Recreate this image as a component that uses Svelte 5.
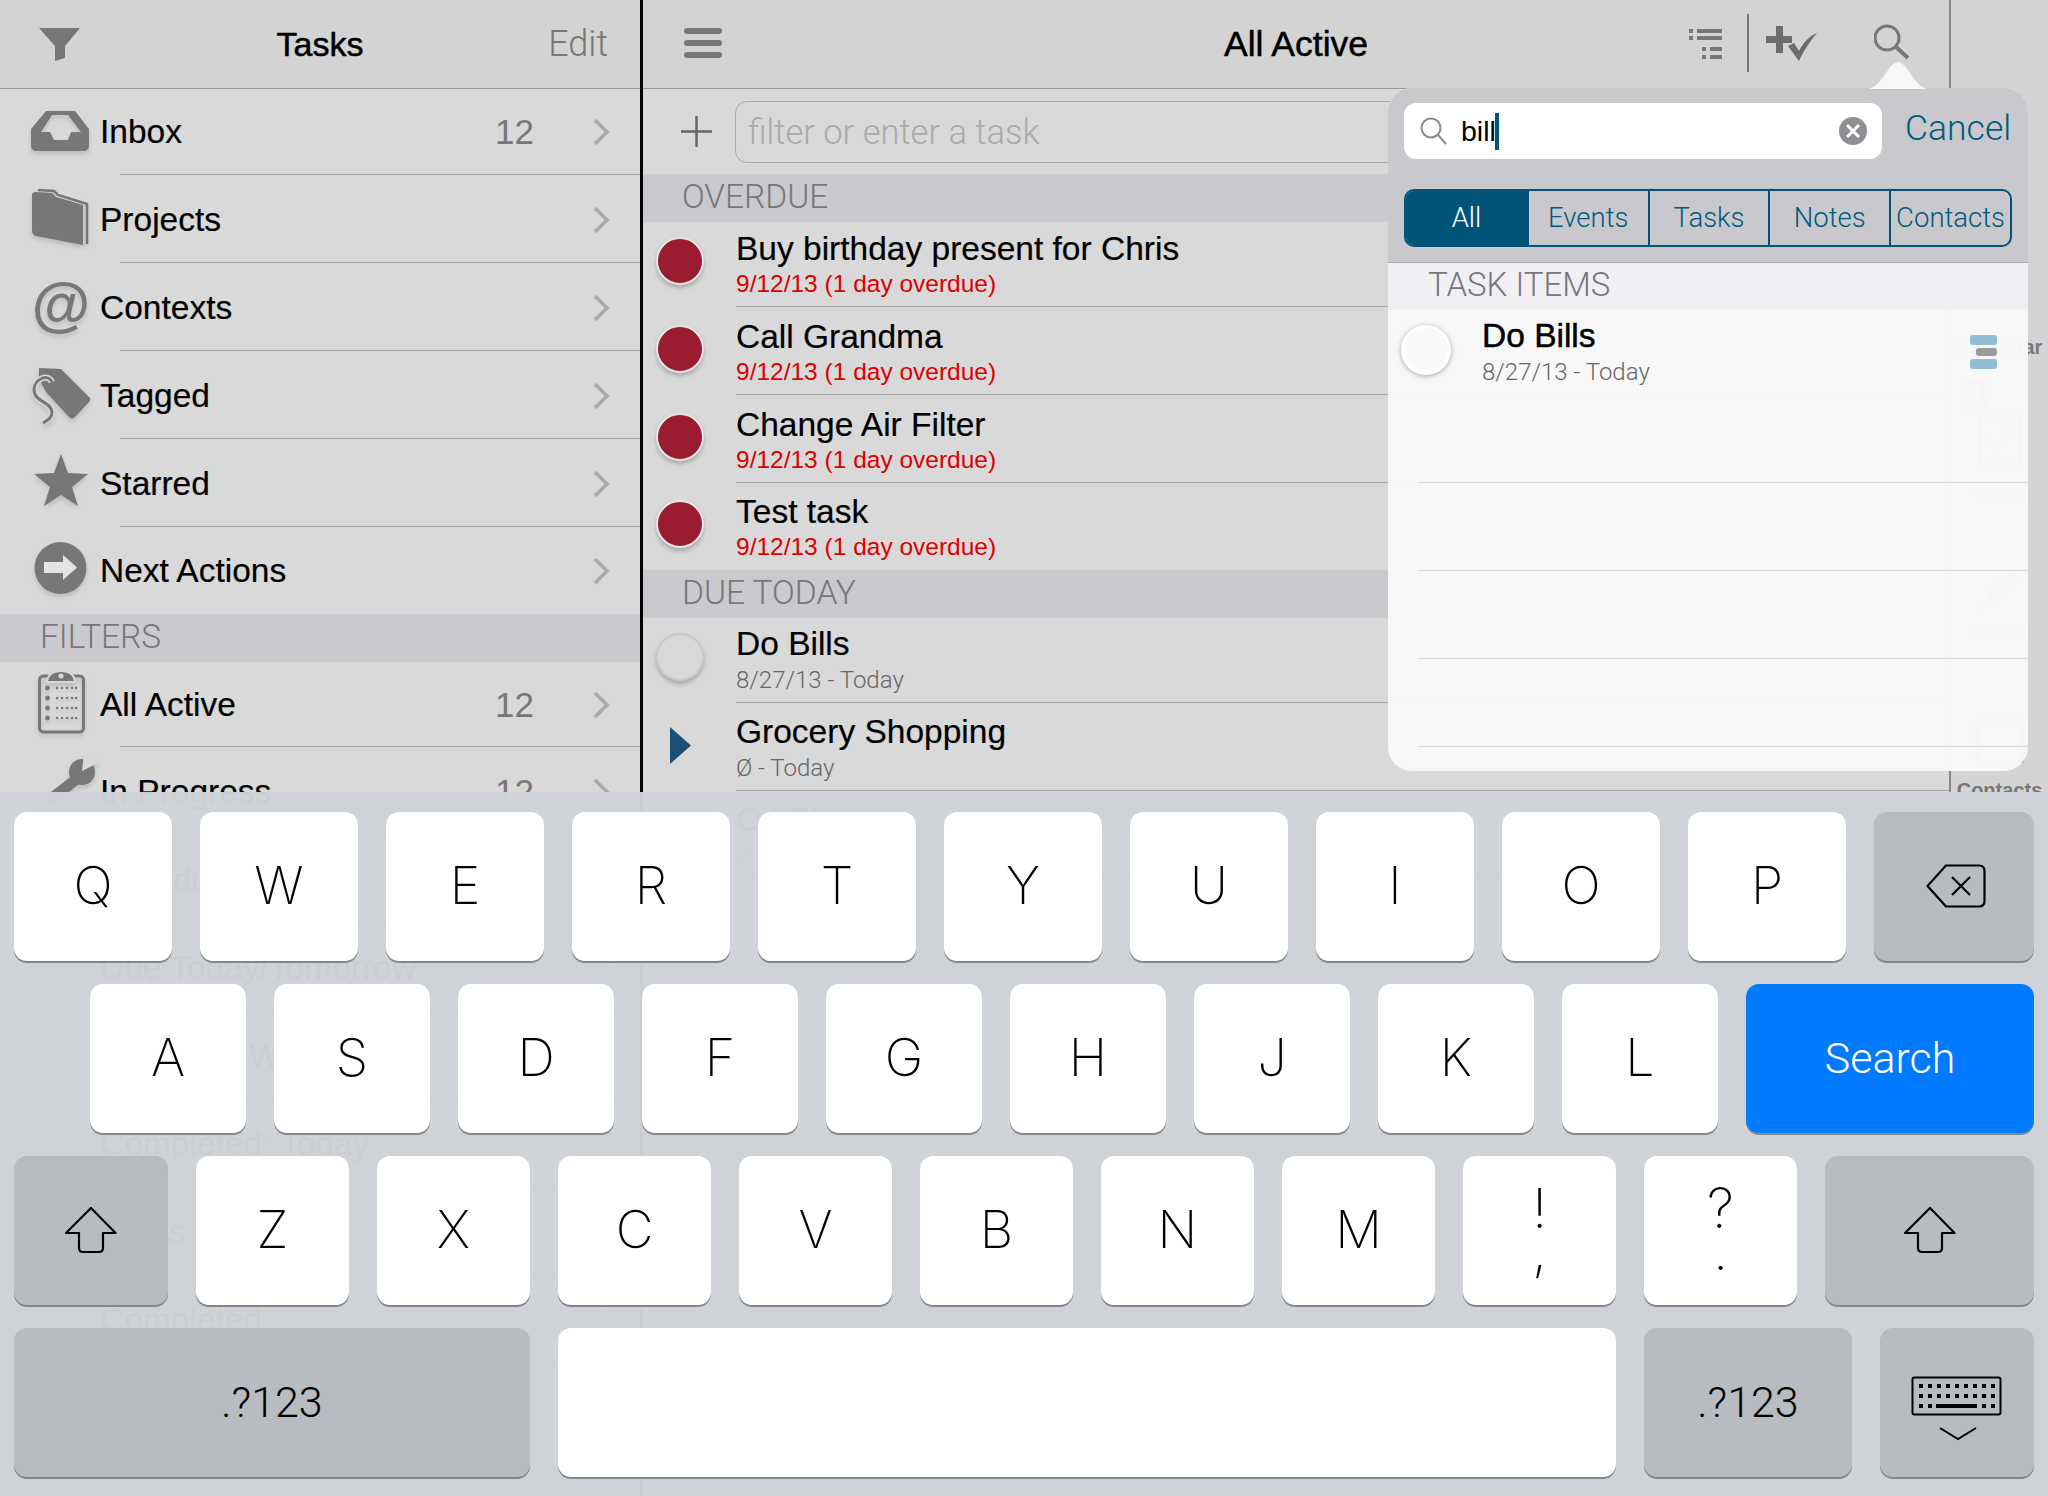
<script>
  const lists = [
    { label: 'Inbox', count: 12, icon: 'inbox' },
    { label: 'Projects', icon: 'folder' },
    { label: 'Contexts', icon: 'at' },
    { label: 'Tagged', icon: 'tag' },
    { label: 'Starred', icon: 'star' },
    { label: 'Next Actions', icon: 'next' }
  ];
  const filters = [
    { label: 'All Active', count: 12, icon: 'clipboard' },
    { label: 'In Progress', count: 12, icon: 'wrench' },
    { label: 'Overdue', icon: '' },
    { label: 'Due Today/Tomorrow', icon: '' },
    { label: 'Due Next Week', icon: '' },
    { label: 'Completed: Today', icon: '' },
    { label: 'Tasks', icon: '' },
    { label: 'Completed', icon: '' }
  ];
  const overdue = ['Buy birthday present for Chris', 'Call Grandma', 'Change Air Filter', 'Test task'];
  const today = [
    { title: 'Do Bills', sub: '8/27/13 - Today', mark: 'open' },
    { title: 'Grocery Shopping', sub: 'Ø - Today', mark: 'play' },
    { title: 'Oil Change', sub: 'Ø - Today', mark: 'open' }
  ];
  const scopes = ['All', 'Events', 'Tasks', 'Notes', 'Contacts'];

  const rows = [
    { cls: 'r1', keys: 'QWERTYUIOP'.split('') },
    { cls: 'r2', keys: 'ASDFGHJKL'.split('') },
    { cls: 'r3', keys: 'ZXCVBNM'.split('') }
  ];
  const dotRows = [28, 38, 48, 58];
  const dotCols = [57, 62, 67, 72, 76];
</script>

{#snippet chevron()}
  <svg class="chev" width="17" height="28" viewBox="0 0 17 28"><path d="M2 2l12 12L2 26" fill="none" stroke="#aaa" stroke-width="3.6" /></svg>
{/snippet}

{#snippet shift()}
  <svg width="54" height="48" viewBox="0 0 54 48"><path d="M27 2L2 27h0.5H15v15q0 4 4 4h16q4 0 4-4V27h12.500z" fill="none" stroke="#000" stroke-width="2.200" stroke-linejoin="round" /></svg>
{/snippet}

{#snippet icon(name)}
  <svg class="ico" width="100" height="88" viewBox="0 0 100 88">
    {#if name === 'inbox'}
      <path fill-rule="evenodd" d="M46 23H75L89 41V58a5 5 0 0 1-5 5H36a5 5 0 0 1-5-5V41ZM52 27L41 44H50L54 52H68L71 44H81L68 27Z" />
    {:else if name === 'folder'}
      <path d="M32 19q0-3 4-3l16 1 4 4 27 8V69L36 60q-4-1-4-5Z" />
      <path d="M38 14l16 1 4 4 29 9V68" fill="none" stroke="#777" stroke-width="2.500" />
    {:else if name === 'at'}
      <text x="60" y="61" text-anchor="middle" font-size="60" font-weight="700" font-style="italic">@</text>
    {:else if name === 'tag'}
      <path d="M39 16L61 17L90 46q1 2-1 4L75 65q-3 3-6 0L46 40 39 27Z" />
      <path d="M52 30C48 21 34 27 34 38 34 50 52 50 52 60 52 66 48 68 43 71" fill="none" stroke="#d9d9d9" stroke-width="6" />
      <path d="M52 30C48 21 34 27 34 38 34 50 52 50 52 60 52 66 48 68 43 71" fill="none" stroke="#777" stroke-width="3" />
    {:else if name === 'star'}
      <path d="M61 14L68 33 88 34 72 47 78 66 61 55 44 66 50 47 34 34 54 33Z" />
    {:else if name === 'next'}
      <circle cx="60.500" cy="42" r="26" />
      <path d="M44 36H63V29L77 41.500 63 54V47H44Z" fill="#e4e4e4" />
    {:else if name === 'clipboard'}
      <rect x="39.500" y="16" width="44" height="56" rx="4" fill="none" stroke="#777" stroke-width="3" />
      <path d="M47 22q1-11 14-11t14 11Z" stroke="#d9d9d9" stroke-width="2" />
      <circle cx="61" cy="16" r="2.500" fill="#d9d9d9" />
      {#each dotRows as y}
        <circle cx="47.500" cy={y} r="2.400" />
        {#each dotCols as x}
          <circle cx={x} cy={y} r="1.300" />
        {/each}
      {/each}
    {:else if name === 'wrench'}
      <path d="M78 30L52 50" stroke="#777" stroke-width="11" stroke-linecap="round" />
      <circle cx="82" cy="24" r="13" />
      <path d="M82 23L84 6 100 14Z" fill="#d9d9d9" />
    {/if}
  </svg>
{/snippet}

<div class="screen">
  <section class="pane left">
    <header class="bar">
      <svg class="funnel" width="42" height="33" viewBox="0 0 42 33"><path d="M0 0H41L26 18V30L16 33V18Z" fill="#777" /></svg>
      <h1>Tasks</h1>
      <span class="edit">Edit</span>
    </header>
    {#each lists as item}
      <div class="row">
        {@render icon(item.icon)}
        <span class="label">{item.label}</span>
        {#if item.count}<span class="count">{item.count}</span>{/if}
        {@render chevron()}
      </div>
    {/each}
    <div class="band">FILTERS</div>
    {#each filters as item}
      <div class="row">
        {@render icon(item.icon)}
        <span class="label">{item.label}</span>
        {#if item.count}<span class="count">{item.count}</span>{/if}
        {@render chevron()}
      </div>
    {/each}
  </section>

  <section class="pane middle">
    <header class="bar">
      <div class="burger"><i></i><i></i><i></i></div>
      <h1 class="big">All Active</h1>
      <div class="tools">
        <svg width="34" height="30" viewBox="0 0 34 30" fill="#777">
          <path d="M1 0h4v4H1zM9 0h25v4H9zM1 7h4v4H1zM9 7h25v4H9zM14 18h4v4h-4zM22 18h12v4H22zM14 26h4v4h-4zM22 26h12v4H22z" />
        </svg>
        <span class="tool-line"></span>
        <svg width="52" height="36" viewBox="0 0 52 36" fill="#6c6c6c">
          <path d="M10 0h7v10h9v7h-9v10h-7V17H0v-7h10z" />
          <path d="M22 20l6-3 5 8C37 17 43 10 51 7 44 15 38 24 33 35Z" />
        </svg>
        <svg class="glass" width="38" height="40" viewBox="0 0 38 40" fill="none" stroke="#777">
          <circle cx="13" cy="16" r="12" stroke-width="3" />
          <path d="M22 25L34 36" stroke-width="4" />
        </svg>
      </div>
    </header>

    <div class="add">
      <svg width="31" height="31" viewBox="0 0 31 31"><path d="M15.500 0v31M0 15.500h31" stroke="#666" stroke-width="2.500" /></svg>
      <div class="filter">filter or enter a task</div>
    </div>

    <div class="band">OVERDUE</div>
    {#each overdue as title}
      <div class="task">
        <span class="dot red"></span>
        <div class="task-body">
          <div class="title">{title}</div>
          <div class="sub late">9/12/13 (1 day overdue)</div>
        </div>
      </div>
    {/each}
    <div class="band">DUE TODAY</div>
    {#each today as t}
      <div class="task today">
        {#if t.mark === 'play'}
          <svg class="play" width="21" height="37" viewBox="0 0 21 37"><path d="M0 0L21 18.500 0 37Z" fill="#1c4f73" /></svg>
        {:else}
          <span class="dot"></span>
        {/if}
        <div class="task-body">
          <div class="title">{t.title}</div>
          <div class="sub">{t.sub}</div>
        </div>
      </div>
    {/each}
  </section>

  <section class="pane side">
    <div class="side-item cal">Calendar</div>
    <div class="badge">4</div>
    <svg class="side-ico" width="44" height="54" viewBox="0 0 44 54"><rect x="2" y="4" width="40" height="48" rx="4" fill="none" stroke="#6f8fb0" stroke-width="3" /><path d="M10 26l9 11 16-22" fill="none" stroke="#6f8fb0" stroke-width="5" /></svg>
    <div class="side-item tasks">Tasks</div>
    <svg class="side-ico pencil" width="44" height="46" viewBox="0 0 44 46"><path d="M4 44L10 28 32 4 42 12 18 36Z" fill="#888" /></svg>
    <div class="side-item notes">Notes</div>
    <svg class="side-ico person" width="50" height="46" viewBox="0 0 50 46"><rect x="2" y="2" width="46" height="42" rx="3" fill="none" stroke="#888" stroke-width="3" /></svg>
    <div class="side-item contacts">Contacts</div>
  </section>

  <aside class="popover">
    <svg class="nub" width="60" height="27" viewBox="0 0 60 27"><path d="M0 27C14 25 20 1 30 0 40 1 46 25 60 27Z" fill="#f7f7f7" /></svg>
    <div class="search-head">
      <div class="search-top">
        <div class="field">
          <svg width="28" height="28" viewBox="0 0 28 28" fill="none" stroke="#8a8a8a" stroke-width="2"><circle cx="11" cy="11" r="9.500" /><path d="M18 18l8 9" /></svg>
          <span class="typed">bill</span><span class="caret"></span>
          <span class="clear">
            <svg width="16" height="16" viewBox="0 0 16 16"><path d="M2 2l12 12M14 2L2 14" stroke="#fff" stroke-width="3" /></svg>
          </span>
        </div>
        <span class="cancel">Cancel</span>
      </div>
      <div class="scopes">
        {#each scopes as s, i}
          <span class="scope" class:on={i === 0}>{s}</span>
        {/each}
      </div>
    </div>
    <div class="results-band">TASK ITEMS</div>
    <div class="hit">
      <span class="dot white"></span>
      <div class="flat">
        <div class="title strong">Do Bills</div>
        <div class="sub">8/27/13 - Today</div>
      </div>
      <div class="prio"><i></i><i class="mid"></i><i></i></div>
    </div>
    <div class="blank"></div>
    <div class="blank"></div>
    <div class="blank"></div>
    <div class="blank"></div>
  </aside>

  <div class="keyboard">
    <div class="krow r1">
      {#each rows[0].keys as k}<div class="key">{k}</div>{/each}
      <div class="key dark back">
        <svg width="60" height="44" viewBox="0 0 60 44" fill="none" stroke="#000" stroke-width="2.200"><path d="M20 1.500H53q5.500 0 5.500 5.500V37q0 5.500-5.500 5.500H20L1.500 22Z" stroke-linejoin="round" /><path d="M26 13L44 31M44 13L26 31" /></svg>
      </div>
    </div>
    <div class="krow r2">
      {#each rows[1].keys as k}<div class="key">{k}</div>{/each}
      <div class="key go">Search</div>
    </div>
    <div class="krow r3">
      <div class="key dark shift-l">{@render shift()}</div>
      {#each rows[2].keys as k}<div class="key">{k}</div>{/each}
      <div class="key stack"><span>!</span><span>,</span></div>
      <div class="key stack"><span>?</span><span>.</span></div>
      <div class="key dark shift-r">{@render shift()}</div>
    </div>
    <div class="krow r4">
      <div class="key dark num wide">.?123</div>
      <div class="key space"></div>
      <div class="key dark num mid">.?123</div>
      <div class="key dark hide">
        <svg width="92" height="66" viewBox="0 0 92 66">
          <rect x="1.500" y="1.500" width="88" height="37" rx="2" fill="none" stroke="#000" stroke-width="2" />
          <path d="M8 8h4v4H8zM17 8h4v4h-4zM26 8h4v4h-4zM35 8h4v4h-4zM44 8h4v4h-4zM53 8h4v4h-4zM62 8h4v4h-4zM71 8h4v4h-4zM80 8h4v4h-4zM8 18h4v4H8zM17 18h4v4h-4zM26 18h4v4h-4zM35 18h4v4h-4zM44 18h4v4h-4zM53 18h4v4h-4zM62 18h4v4h-4zM71 18h4v4h-4zM80 18h4v4h-4zM8 28h4v4H8zM17 28h4v4h-4zM25 28h41v4H25zM71 28h4v4h-4zM80 28h4v4h-4z" fill="#000" />
          <path d="M29 52l18 11 18-11" fill="none" stroke="#000" stroke-width="2" />
        </svg>
      </div>
    </div>
  </div>
</div>

<style>
  :global(body) {
    margin: 0;
    background: #d9d9d9;
  }

  .screen {
    position: relative;
    display: flex;
    width: 2048px;
    height: 1496px;
    overflow: hidden;
    font-family: "Liberation Sans", Arial, sans-serif;
    color: #000;
  }

  .pane {
    flex: none;
    background: #d9d9d9;
  }

  .left {
    width: 640px;
    border-right: 3px solid #000;
  }

  .middle {
    width: 1306px;
    border-right: 2px solid #888;
  }

  .side {
    flex: 1;
    box-sizing: border-box;
    padding-top: 335px;
    background: #d4d4d4;
    display: flex;
    flex-direction: column;
    align-items: center;
    color: #777;
    font-size: 21px;
  }

  .bar {
    position: relative;
    height: 88px;
    border-bottom: 1px solid #9a9a9a;
    background: #d3d3d3;
    display: flex;
    align-items: center;
    justify-content: center;
  }

  .bar h1 {
    margin: 0;
    font-size: 34px;
    font-weight: 400;
    -webkit-text-stroke: 0.5px #000;
  }

  .bar h1.big {
    font-size: 35.500px;
  }

  .funnel {
    position: absolute;
    left: 39px;
    top: 28px;
  }

  .edit {
    position: absolute;
    right: 32px;
    font-family: Roboto, sans-serif;
    font-weight: 300;
    font-size: 36px;
    color: #777;
  }

  .row {
    position: relative;
    height: 88px;
    display: flex;
    align-items: center;
    padding-right: 30px;
    box-sizing: border-box;
    border-bottom: 1px solid transparent;
  }

  .bar + .row {
    height: 87px;
  }

  .row::after {
    content: "";
    position: absolute;
    left: 120px;
    right: 0;
    bottom: 0;
    height: 1px;
    background: #a8a8a8;
  }

  .band + .row,
  .row:has(+ .band) {
    height: 86px;
  }

  .row:has(+ .band)::after {
    display: none;
  }

  .ico {
    flex: none;
    align-self: flex-end;
    fill: #777;
    color: #777;
    filter: drop-shadow(0 3px 2px rgba(0, 0, 0, 0.13));
    margin-bottom: -1px;
  }

  .label {
    flex: 1;
    font-size: 33.500px;
    -webkit-text-stroke: 0.2px #000;
  }

  .count {
    margin-right: 59px;
    font-size: 35px;
    color: #777;
  }

  .band {
    height: 48px;
    line-height: 46px;
    padding-left: 40px;
    background: #c9c9ce;
    color: #777;
    font-family: Roboto, sans-serif;
    font-weight: 300;
    font-size: 33.500px;
  }

  .middle .band {
    padding-left: 39px;
  }

  .burger {
    position: absolute;
    left: 41px;
    top: 28px;
    display: flex;
    flex-direction: column;
    gap: 6px;
  }

  .burger i {
    width: 38px;
    height: 6px;
    border-radius: 3px;
    background: #777;
  }

  .tools {
    position: absolute;
    left: 1045px;
    top: 0;
    height: 88px;
  }

  .tools svg,
  .tool-line {
    position: absolute;
  }

  .tools svg:nth-of-type(1) {
    left: 0;
    top: 29px;
  }

  .tool-line {
    left: 59px;
    top: 14px;
    width: 2px;
    height: 58px;
    background: #777;
  }

  .tools svg:nth-of-type(2) {
    left: 78px;
    top: 26px;
  }

  .tools svg:nth-of-type(3) {
    left: 186px;
    top: 22px;
  }

  .add {
    display: flex;
    align-items: center;
    height: 85px;
    padding-left: 38px;
    gap: 23px;
    box-sizing: border-box;
  }

  .filter {
    flex: 1;
    height: 60px;
    margin-right: 40px;
    line-height: 60px;
    padding-left: 12px;
    border: 1.500px solid #aaa;
    border-radius: 12px;
    color: #aaa;
    font-family: Roboto, sans-serif;
    font-weight: 300;
    font-size: 34.500px;
  }

  .task {
    position: relative;
    height: 88px;
    box-sizing: border-box;
    padding-left: 93px;
    display: flex;
    flex-direction: column;
    justify-content: flex-end;
  }

  .band + .task {
    height: 85px;
  }

  .task:has(+ .band) {
    height: 87px;
  }

  .task:has(+ .band) .task-body {
    border-bottom-color: transparent;
  }

  .task-body {
    height: 88px;
    flex: none;
    box-sizing: border-box;
    border-bottom: 1px solid #a8a8a8;
    padding-top: 11px;
  }

  .today .task-body {
    padding-top: 10px;
  }

  .title {
    font-size: 33.500px;
    line-height: 38px;
    -webkit-text-stroke: 0.2px #000;
  }

  .sub {
    margin-top: 2px;
    font-size: 24px;
    line-height: 30px;
    color: #666;
    font-family: Roboto, sans-serif;
    font-weight: 300;
  }

  .late {
    margin-top: 1px;
    color: #de0000;
    font-family: "Liberation Sans", sans-serif;
    font-size: 24.500px;
    font-weight: 400;
  }

  .dot {
    position: absolute;
    left: 13px;
    bottom: 22px;
    width: 44px;
    height: 44px;
    box-sizing: content-box;
    border: 2.500px solid #cbcbcb;
    border-radius: 50%;
    background: #d9d9d9;
    box-shadow: 0 3px 4px rgba(0, 0, 0, 0.22);
  }

  .dot.red {
    background: #991c30;
    border-color: #e6e6e6;
  }

  .play {
    position: absolute;
    left: 27px;
    bottom: 27px;
  }

  .side-ico {
    display: block;
    flex: none;
  }

  .side-item {
    line-height: 24px;
  }

  .cal,
  .contacts {
    font-weight: 700;
    font-size: 20px;
  }

  .badge {
    align-self: flex-start;
    margin: 20px 0 2px 10px;
    width: 29px;
    height: 31px;
    border-radius: 6px;
    background: #d36a60;
    color: #fff;
    text-align: center;
    font-size: 26px;
  }

  .tasks {
    margin-top: 16px;
  }

  .pencil {
    margin-top: 59px;
  }

  .notes {
    margin-top: 10px;
  }

  .person {
    margin-top: 73px;
  }

  .contacts {
    margin-top: 14px;
  }

  /* search popover, hangs off the magnifier */
  .popover {
    position: absolute;
    left: 1388px;
    top: 88px;
    width: 640px;
    height: 683px;
    border-radius: 24px;
    background: rgba(248, 248, 248, 0.975);
  }

  .nub {
    position: absolute;
    left: 480px;
    top: -26px;
  }

  .search-head {
    height: 175px;
    box-sizing: border-box;
    padding: 15px 16px 0;
    border-radius: 24px 24px 0 0;
    background: #c8c8cd;
    border-bottom: 1.500px solid #a9a9ad;
  }

  .search-top {
    display: flex;
    align-items: center;
    gap: 23px;
  }

  .field {
    position: relative;
    width: 478px;
    height: 56px;
    box-sizing: border-box;
    padding-left: 16px;
    border-radius: 12px;
    background: #fff;
    display: flex;
    align-items: center;
  }

  .typed {
    margin-left: 13px;
    font-size: 28.500px;
  }

  .caret {
    width: 4px;
    height: 37px;
    background: #005478;
    margin-left: -1px;
  }

  .clear {
    position: absolute;
    right: 15px;
    top: 14px;
    width: 28px;
    height: 28px;
    border-radius: 50%;
    background: #8e8e93;
    display: flex;
    align-items: center;
    justify-content: center;
  }

  .cancel {
    margin-top: -6px;
    color: #005a7e;
    font-family: Roboto, sans-serif;
    font-weight: 300;
    font-size: 35.500px;
  }

  .scopes {
    display: grid;
    grid-template-columns: repeat(5, 1fr);
    width: 608px;
    height: 58px;
    margin-top: 30px;
    box-sizing: border-box;
    border: 2.500px solid #005478;
    border-radius: 10px;
    overflow: hidden;
  }

  .scope {
    display: flex;
    align-items: center;
    justify-content: center;
    padding-bottom: 2px;
    border-left: 2.500px solid #005478;
    color: #005a7e;
    font-family: Roboto, sans-serif;
    font-weight: 300;
    font-size: 27.500px;
  }

  .scope.on {
    border-left: 0;
    background: #005478;
    color: #fff;
  }

  .results-band {
    height: 47px;
    line-height: 44px;
    padding-left: 40px;
    background: #efeff4;
    color: #777;
    font-family: Roboto, sans-serif;
    font-weight: 300;
    font-size: 33px;
  }

  .hit {
    position: relative;
    height: 85px;
    padding-left: 94px;
  }

  .flat {
    padding-top: 7px;
  }

  .strong {
    -webkit-text-stroke: 0.5px #000;
  }

  .hit .dot.white {
    left: 13px;
    top: 15px;
    bottom: auto;
    background: #fafafa;
    border: 3px solid #fff;
    box-shadow: 0 1px 5px rgba(0, 0, 0, 0.35);
  }

  .prio {
    position: absolute;
    right: 31px;
    top: 25px;
    width: 27px;
    display: flex;
    flex-direction: column;
    align-items: flex-end;
    gap: 3px;
  }

  .prio i {
    width: 27px;
    height: 10px;
    border-radius: 3px;
    background: #90bcd4;
  }

  .prio i.mid {
    width: 21px;
    height: 8px;
    background: #9a9a9a;
  }

  .blank {
    height: 88px;
    position: relative;
  }

  .blank::after {
    content: "";
    position: absolute;
    left: 30px;
    right: 0;
    bottom: 0;
    height: 1px;
    background: #d9d9e2;
  }

  /* on-screen keyboard */
  .keyboard {
    position: absolute;
    left: 0;
    right: 0;
    top: 792px;
    bottom: 0;
    box-sizing: border-box;
    padding: 20px 14px 0;
    background: rgba(207, 210, 214, 0.975);
    display: flex;
    flex-direction: column;
    gap: 23px;
  }

  .krow {
    display: flex;
    gap: 28px;
    height: 149px;
  }

  .r2 {
    padding-left: 76px;
  }

  .key {
    flex: none;
    width: 158px;
    height: 149px;
    box-sizing: border-box;
    padding-bottom: 2px;
    border-radius: 13px;
    background: #fff;
    box-shadow: 0 2px 0 #85878a;
    display: flex;
    align-items: center;
    justify-content: center;
    font-family: Inter, Roboto, sans-serif;
    font-weight: 200;
    font-size: 52px;
  }

  .r2 .key {
    width: 156px;
  }

  .r3 .key {
    width: 153px;
  }

  .key.dark {
    background: #b8bbbf;
  }

  .key.back {
    width: 160px;
    padding-left: 3px;
  }

  .r2 .key.go {
    width: 288px;
    background: #007aff;
    color: #fff;
    font-family: Roboto, sans-serif;
    font-weight: 300;
    font-size: 43px;
  }

  .r3 .key.shift-l {
    width: 154px;
  }

  .r3 .key.shift-r {
    width: 209px;
  }

  .key.stack {
    flex-direction: column;
    padding-bottom: 4px;
    font-size: 55px;
    line-height: 42px;
  }

  .key.num {
    font-family: Roboto, sans-serif;
    font-weight: 300;
    font-size: 43px;
  }

  .key.wide {
    width: 516px;
  }

  .key.mid {
    width: 208px;
  }

  .key.space {
    width: 1058px;
  }

  .key.hide {
    width: 154px;
    padding-top: 14px;
  }
</style>
